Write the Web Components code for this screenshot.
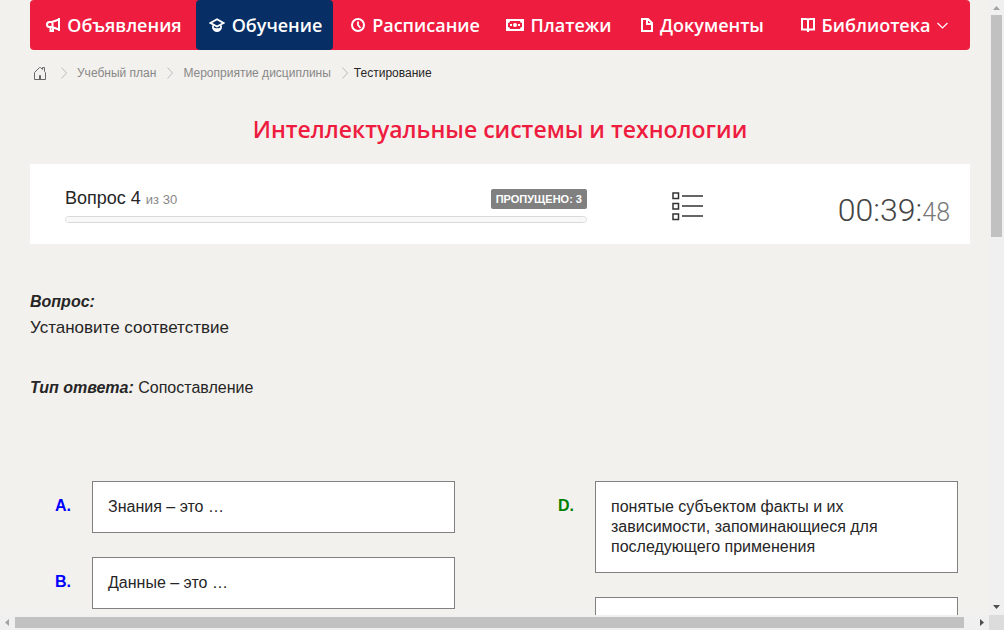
<!DOCTYPE html>
<html lang="ru">
<head>
<meta charset="utf-8">
<meta name="viewport" content="width=device-width, initial-scale=1">
<title>Тестирование</title>
<style>
  body {
    margin: 0;
    background: #f3f1ed;
    color: #262626;
    font: 16px/20px "Liberation Sans", Arial, sans-serif;
    --brand: #ee1c3f;
    --active: #072f65;
    --display: "Open Sans", "Noto Sans", sans-serif;
    --light: Roboto, "Open Sans", sans-serif;
  }
</style>
</head>
<body>
<scroll-frame>
  <main-nav>
    <nav-item icon="horn">Объявления</nav-item>
    <nav-item icon="cap" active>Обучение</nav-item>
    <nav-item icon="clock">Расписание</nav-item>
    <nav-item icon="money">Платежи</nav-item>
    <nav-item icon="file">Документы</nav-item>
    <nav-item icon="book" more>Библиотека</nav-item>
  </main-nav>
  <bread-crumbs></bread-crumbs>
  <page-title>Интеллектуальные системы и технологии</page-title>
  <test-status number="4" total="30" skipped="3" time="00:39:" seconds="48"></test-status>
  <question-text kind="Сопоставление">Установите соответствие</question-text>
  <match-board>
    <match-option slot="left" letter="A.">Знания – это …</match-option>
    <match-option slot="left" letter="B.">Данные – это …</match-option>
    <match-option slot="right" letter="D.">понятые субъектом факты и их зависимости, запоминающиеся для последующего применения</match-option>
    <match-option slot="right"></match-option>
  </match-board>
</scroll-frame>

<script>
const ICONS = {
  horn: [14, 14, '<path d="M13 0v13M13 1.500 6 4H3.500a2.500 2.500 0 0 0 0 5H6l7 2.500M6.500 4v5M4.500 9v4H7v-3" fill="none" stroke="currentColor" stroke-width="2"/>'],
  cap: [16, 14, '<path d="M8 1.200 1.500 5 8 8.500 14.500 5zM4 7.500V10q1 3 4 3t4-3V7.500M5 10.500q3 1.500 6 0" fill="none" stroke="currentColor" stroke-width="1.800"/>'],
  clock: [14, 14, '<circle cx="7" cy="7" r="6" fill="none" stroke="currentColor" stroke-width="2"/><path d="M7 3.500V7l2.500 3" fill="none" stroke="currentColor" stroke-width="1.800"/>'],
  money: [18, 12, '<path d="M0 0h18v12H0zM2 4v4q2 0 2 2h10q0-2 2-2V4q-2 0-2-2H4q0 2-2 2z" fill="currentColor" fill-rule="evenodd"/><circle cx="9" cy="6" r="2" fill="currentColor"/><path d="M4 5h2v2H4zM12 5h2v2h-2z" fill="currentColor"/>'],
  file: [12, 14, '<path d="M1 1h6l4 4v8H1zM6 1v5h5" fill="none" stroke="currentColor" stroke-width="2"/>'],
  book: [14, 14, '<path d="M1 1h4q2 0 2 1 0-1 2-1h4v10.500H9q-2 0-2 1.500 0-1.500-2-1.500H1zM7 2v12" fill="none" stroke="currentColor" stroke-width="2"/>'],
  down: [11, 7, '<path d="m.5 1 5 5 5-5" fill="none" stroke="currentColor" stroke-width="1.200"/>'],
  next: [7, 12, '<path d="m.5.500 5 5.500-5 5.500" fill="none" stroke="currentColor"/>'],
  home: [12, 13, '<path d="M.5 12.500V5.500L5.500.500h1L8.500 2.500V.500h2V4.500l1 1v7zM5.500 12V8.500h1V12" fill="none" stroke="currentColor"/>'],
  list: [32, 29, '<path d="M1 1h5.500v5.500H1zM1 11.500h5.500V17H1zM1 22h5.500v5.500H1z" fill="none" stroke="#333" stroke-width="1.500"/><path d="M10 4h21M10 14h21M10 24h21" stroke="#333" stroke-width="1.400"/>']
};
const icon = name => {
  const [w, h, body] = ICONS[name];
  return `<svg width="${w}" height="${h}" viewBox="0 0 ${w} ${h}" aria-hidden="true">${body}</svg>`;
};
const define = (name, render) => customElements.define(name, class extends HTMLElement {
  connectedCallback() {
    if (this.shadowRoot) return;
    this.attachShadow({ mode: "open" }).innerHTML = render(this);
  }
});
const attr = (el, name) => el.getAttribute(name) || "";

define("scroll-frame", () => `
  <style>
    :host { display: grid; height: 100vh; grid-template: minmax(0, 1fr) 15px / minmax(0, 1fr) 15px; }
    main { overflow: hidden; padding: 0 19px 0 30px; }
    .corner { background: #dcdcdc; }
  </style>
  <main><slot></slot></main>
  <scroll-bar></scroll-bar>
  <scroll-bar horizontal></scroll-bar>
  <div class="corner"></div>`);

define("scroll-bar", el => {
  const flat = el.hasAttribute("horizontal");
  const start = flat ? "M9 4v7L5 7.500z" : "M4 10h7L7.500 6z";
  const end = flat ? "M6 4v7l4-3.500z" : "M4 5h7L7.500 9z";
  const arrow = (d, c) => `<svg width="15" height="15" viewBox="0 0 15 15" aria-hidden="true"><path d="${d}" fill="${c}"/></svg>`;
  return `
  <style>
    :host { display: flex; flex-direction: ${flat ? "row" : "column"}; background: #f0f0f1; }
    svg { display: block; flex: none; }
    .track { flex: 1; display: flex; flex-direction: inherit; }
    .thumb { background: #c1c1c1; ${flat ? "width: 99%; margin: 2px 0;" : "height: 38%; margin: 0 2px;"} }
  </style>
  ${arrow(start, "#a3a3a3")}<div class="track"><div class="thumb"></div></div>${arrow(end, "#505050")}`;
});

define("main-nav", () => `
  <style>
    :host { display: block; }
    nav { display: grid; grid-template-columns: 166fr 137fr 163fr 123fr 165fr 179fr; padding-right: 7px; height: 50px; background: var(--brand); border-radius: 4px; }
  </style>
  <nav><slot></slot></nav>`);

define("nav-item", el => `
  <style>
    :host { display: block; min-width: 0; border-radius: 4px; }
    :host([active]) { background: var(--active); }
    a { display: flex; align-items: center; justify-content: center; gap: 7px; height: 50px; padding-left: 2px; color: #fff; font: 600 18px/24px var(--display); text-decoration: none; white-space: nowrap; }
    svg { flex: none; }
  </style>
  <a href="#">${icon(attr(el, "icon"))}<slot></slot>${el.hasAttribute("more") ? icon("down") : ""}</a>`);

define("bread-crumbs", () => `
  <style>
    :host { display: block; }
    ol { display: flex; align-items: center; gap: 9px; margin: 0; padding: 14px 4px; list-style: none; font-size: 12px; line-height: 18px; color: #262626; }
    li { display: flex; align-items: center; gap: 11px; }
    li:first-child { gap: 15px; }
    li:last-child { margin-left: -4px; }
    a { color: #888; text-decoration: none; }
    a svg { display: block; color: #666; }
    li > svg { color: #bbb; }
  </style>
  <nav aria-label="Навигация"><ol>
    <li><a href="#" aria-label="Главная">${icon("home")}</a>${icon("next")}</li>
    <li><a href="#">Учебный план</a>${icon("next")}</li>
    <li><a href="#">Мероприятие дисциплины</a>${icon("next")}</li>
    <li aria-current="page">Тестирование</li>
  </ol></nav>`);

define("page-title", () => `
  <style>
    :host { display: block; }
    h1 { margin: 0; padding: 17px 0 19px; text-align: center; color: var(--brand); font: 600 23px/32px var(--display); }
  </style>
  <h1><slot></slot></h1>`);

define("test-status", el => `
  <style>
    :host { display: grid; grid-template-columns: 557fr 201fr 182fr; align-items: center; height: 80px; background: #fff; }
    .progress { padding: 4px 0 0 35px; }
    .head { display: flex; justify-content: space-between; align-items: center; height: 20px; margin-bottom: 7px; }
    label { font-size: 18px; line-height: 22px; }
    small { font-size: 13px; color: #888; }
    .badge { padding: 0 5px; border-radius: 2px; background: #808080; color: #fff; font: bold 11px/20px "Liberation Sans", Arial, sans-serif; text-transform: uppercase; }
    progress { display: block; width: 100%; height: 7px; appearance: none; box-sizing: border-box; border: 1px solid #d9d9d9; border-radius: 4px; overflow: hidden; background: #f8f8f8; }
    progress::-webkit-progress-bar { background: #f8f8f8; }
    button { justify-self: center; padding: 4px 0 0; border: 0; background: none; }
    button svg { display: block; }
    time { justify-self: end; padding: 14px 20px 0 0; font: 300 32px/40px var(--light); color: #444; white-space: nowrap; }
    time span { font-size: 25px; color: #777; }
  </style>
  <div class="progress">
    <div class="head">
      <label for="bar">Вопрос ${attr(el, "number")} <small>из ${attr(el, "total")}</small></label>
      <span class="badge">Пропущено: ${attr(el, "skipped")}</span>
    </div>
    <progress id="bar" value="0" max="${attr(el, "total")}"></progress>
  </div>
  <button type="button" aria-label="Список вопросов">${icon("list")}</button>
  <time>${attr(el, "time")}<span>${attr(el, "seconds")}</span></time>`);

define("question-text", el => `
  <style>
    :host { display: block; padding: 45px 0 80px; line-height: 26px; }
    p { margin: 0; }
    .text { font-size: 17px; margin-bottom: 34px; }
    b { font-style: italic; }
  </style>
  <p><b>Вопрос:</b></p>
  <p class="text"><slot></slot></p>
  <p><b>Тип ответа:</b> ${attr(el, "kind")}</p>`);

define("match-board", () => `
  <style>
    :host { display: grid; grid-template-columns: 1fr 1fr; column-gap: 103px; padding: 0 12px 24px 25px; }
    .left { --letter: #00f; }
    .right { --letter: #008000; }
    div { display: flex; flex-direction: column; gap: 24px; }
  </style>
  <div class="left"><slot name="left"></slot></div>
  <div class="right"><slot name="right"></slot></div>`);

define("match-option", el => `
  <style>
    :host { display: grid; grid-template-columns: 37px minmax(0, 1fr); }
    b { padding-top: 15px; color: var(--letter); }
    .box { min-height: 20px; padding: 15px; border: 1px solid #808080; background: #fff; }
  </style>
  <b>${attr(el, "letter")}</b>
  <div class="box"><slot></slot></div>`);
</script>
</body>
</html>
